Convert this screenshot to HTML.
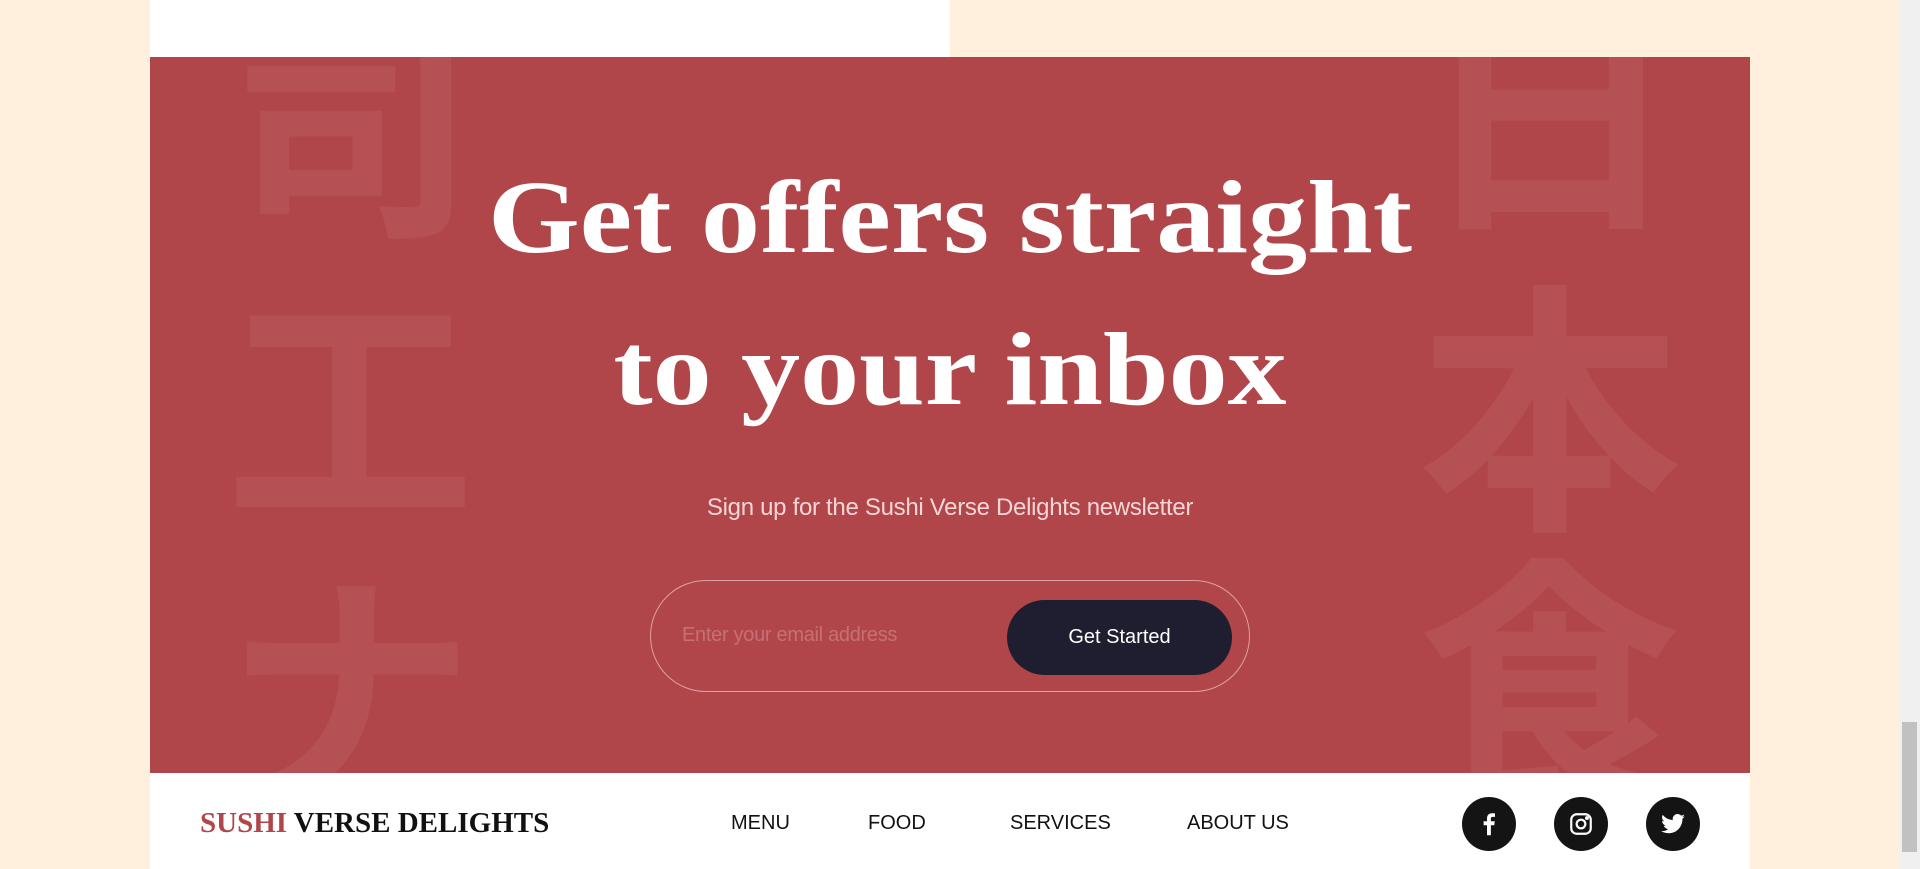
<!DOCTYPE html>
<html><head><meta charset="utf-8"><style>
*{margin:0;padding:0;box-sizing:border-box}
body{width:1920px;height:869px;background:#ffefdd;position:relative;overflow:hidden;font-family:"Liberation Sans",sans-serif}
.white{position:absolute;left:150px;top:0;width:800px;height:57px;background:#fff}
.red{position:absolute;left:150px;top:57px;width:1600px;height:716px;background:#b0464a;overflow:hidden}
.k{position:absolute;width:340px;height:277px;line-height:277px;text-align:center;font-family:"Noto Sans CJK JP",sans-serif;font-weight:700;font-size:250px;color:#b55054}
.r{font-size:264px}
h1{position:absolute;left:0;width:1600px;text-align:center;color:#fff;font-family:"Liberation Serif",serif;font-weight:700;font-size:118px;line-height:172.7px;top:85px;transform:scaleY(.88);transform-origin:50% 0}
.sub{position:absolute;left:0;width:1600px;top:437px;text-align:center;color:#f3d5d5;font-size:24px;letter-spacing:-0.3px}
.pill{position:absolute;left:500px;top:523px;width:600px;height:112px;border:1px solid #dea0a2;border-radius:56px}
.ph{position:absolute;left:31px;top:43px;font-size:20px;color:#c86f74;letter-spacing:-0.3px}
.btn{position:absolute;left:356px;top:19px;width:225px;height:75px;border-radius:38px;background:#1e1e30;color:#fff;font-size:20px;text-align:center;line-height:75px}
.foot{position:absolute;left:150px;top:773px;width:1600px;height:96px;background:#fff}
.logo{position:absolute;left:50px;top:34px;font-family:"Liberation Serif",serif;font-weight:700;font-size:29px;color:#111}
.logo span{color:#b0464a}
.nav{position:absolute;top:39px;font-size:20px;color:#111}
.ic{position:absolute;top:24px;width:54px;height:54px;border-radius:50%;background:#141414;display:flex;align-items:center;justify-content:center}
.sb{position:absolute;right:0;top:0;width:20px;height:869px;background:#f0f0f0}
.th{position:absolute;right:3px;top:722px;width:15px;height:130px;background:#c1c1c1}
</style></head><body>
<div class="white"></div>
<div class="red">
<div class="k" style="left:30px;top:-87px">司</div>
<div class="k" style="left:30px;top:198px">工</div>
<div class="k" style="left:30px;top:480px">ナ</div>
<div class="k r" style="left:1230px;top:-100px">日</div>
<div class="k r" style="left:1230px;top:200px">本</div>
<div class="k r" style="left:1230px;top:474px">食</div>
<h1>Get offers straight<br>to your inbox</h1>
<div class="sub">Sign up for the Sushi Verse Delights newsletter</div>
<div class="pill"><div class="ph">Enter your email address</div><div class="btn">Get Started</div></div>
</div>
<div class="foot">
<div class="logo"><span>SUSHI</span> VERSE DELIGHTS</div>
<div class="nav" style="left:581px">MENU</div>
<div class="nav" style="left:718px">FOOD</div>
<div class="nav" style="left:860px">SERVICES</div>
<div class="nav" style="left:1037px">ABOUT US</div>
<div class="ic" style="left:1312px"><svg width="30" height="30" viewBox="0 0 24 24"><path fill="#fff" d="M13.5 21v-8h2.7l.4-3.2h-3.1V7.8c0-.9.3-1.5 1.6-1.5h1.7V3.5c-.3 0-1.3-.1-2.4-.1-2.4 0-4 1.5-4 4.1v2.3H7.7V13h2.7v8z"/></svg></div>
<div class="ic" style="left:1404px"><svg width="26" height="26" viewBox="0 0 24 24" fill="none" stroke="#fff" stroke-width="2"><rect x="3" y="3" width="18" height="18" rx="5"/><circle cx="12" cy="12" r="4"/><circle cx="17.5" cy="6.5" r=".8" fill="#fff"/></svg></div>
<div class="ic" style="left:1496px"><svg width="26" height="26" viewBox="0 0 24 24"><path fill="#fff" d="M23 5c-.8.4-1.7.6-2.6.7.9-.6 1.6-1.4 2-2.5-.9.5-1.9.9-2.9 1.1A4.5 4.5 0 0 0 11.8 8.4 12.8 12.8 0 0 1 2.5 3.6a4.5 4.5 0 0 0 1.4 6c-.7 0-1.4-.2-2-.6 0 2.2 1.6 4 3.6 4.4-.7.2-1.4.2-2 .1.6 1.8 2.2 3.1 4.2 3.1A9 9 0 0 1 1 18.5 12.8 12.8 0 0 0 7.9 20.5c8.3 0 12.8-6.9 12.8-12.8v-.6c.9-.6 1.6-1.4 2.3-2.1z"/></svg></div>
</div>
<div class="sb"><div class="th"></div></div>
</body></html>
